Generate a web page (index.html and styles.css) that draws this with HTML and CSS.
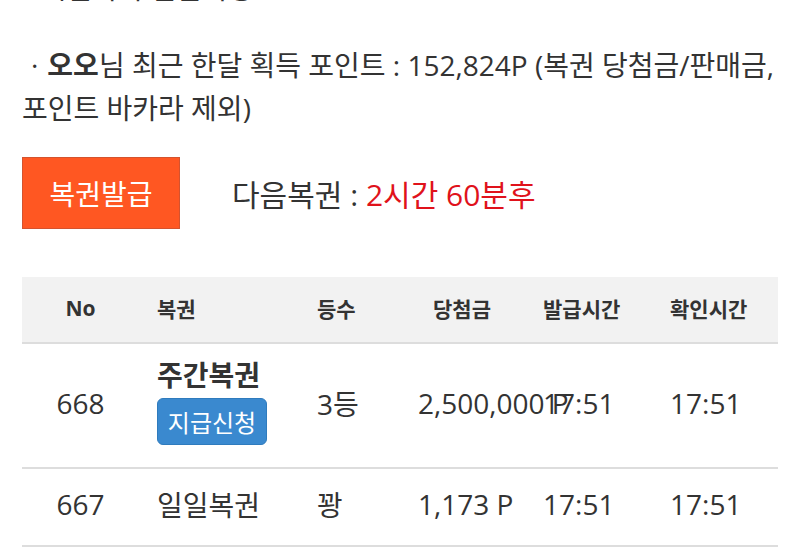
FILE: index.html
```html
<!DOCTYPE html>
<html lang="ko">
<head>
<meta charset="utf-8">
<title>복권</title>
<link rel="stylesheet" href="styles.css">
</head>
<body>
<div class="page">
  <p class="note note-top">3시간마다 발급가능</p>
  <p class="note"><span class="dot">·</span><b>오오</b>님 최근 한달 획득 포인트 : 152,824P (복권 당첨금/판매금,<br>포인트 바카라 제외)</p>
  <div class="issue">
    <button class="btn-issue" type="button">복권발급</button>
    <p class="next">다음복권 : <span class="red">2시간 60분후</span></p>
  </div>
  <table class="lotto">
    <colgroup>
      <col class="c-no"><col class="c-name"><col class="c-rank"><col class="c-prize"><col class="c-issue"><col class="c-check">
    </colgroup>
    <thead>
      <tr>
        <th class="t-no">No</th>
        <th>복권</th>
        <th>등수</th>
        <th class="t-prize">당첨금</th>
        <th>발급시간</th>
        <th>확인시간</th>
      </tr>
    </thead>
    <tbody>
      <tr class="row-tall">
        <td class="t-no">668</td>
        <td>
          <div class="name-bold">주간복권</div>
          <button class="btn-claim" type="button">지급신청</button>
        </td>
        <td>3등</td>
        <td class="t-prize">2,500,000 P</td>
        <td>17:51</td>
        <td>17:51</td>
      </tr>
      <tr class="row-short">
        <td class="t-no">667</td>
        <td>일일복권</td>
        <td>꽝</td>
        <td class="t-prize">1,173 P</td>
        <td>17:51</td>
        <td>17:51</td>
      </tr>
    </tbody>
  </table>
</div>
</body>
</html>
```

FILE: styles.css
```css
html, body {
  margin: 0;
  padding: 0;
  background: #ffffff;
}
body {
  font-family: "Open Sans", "Noto Sans CJK KR", sans-serif;
  color: #333333;
  font-size: 28px;
  overflow: hidden;
}
.page {
  padding: 0 22px;
}
.note {
  margin: 0;
  line-height: 43px;
}
.note-top {
  margin-top: -33px;
  margin-bottom: 34px;
  padding-left: 3px;
}
.note b {
  font-weight: 700;
}
.dot {
  display: inline-block;
  padding-left: 9px;
  margin-right: 9px;
}
.issue {
  display: flex;
  align-items: center;
  gap: 52px;
  margin-top: 27px;
}
.btn-issue {
  width: 158px;
  height: 72px;
  background: #ff5722;
  border: 1px solid #d4532e;
  color: #ffffff;
  font-family: "Open Sans", "Noto Sans CJK KR", sans-serif;
  font-size: 28px;
  padding: 0;
  margin: 0;
}
.next {
  margin: 0;
  font-size: 30px;
}
.red {
  color: #e0121b;
}
.lotto {
  margin-top: 48px;
  width: 756px;
  border-collapse: collapse;
  table-layout: fixed;
}
.c-no { width: 135px; }
.c-name { width: 160px; }
.c-rank { width: 101px; }
.c-prize { width: 125px; }
.c-issue { width: 127px; }
.c-check { width: 108px; }
.lotto th {
  background: #f2f2f2;
  height: 61px;
  font-size: 21px;
  font-weight: 700;
  text-align: left;
  padding: 0 0 4px;
  border-bottom: 2px solid #dddddd;
}
.lotto td {
  padding: 0 0 6px;
  text-align: left;
  white-space: nowrap;
  vertical-align: middle;
  border-bottom: 2px solid #dddddd;
}
.lotto .t-no {
  text-align: center;
  padding-right: 18px;
}
.lotto th.t-prize {
  text-align: center;
  padding-right: 37px;
}
.lotto td.t-prize {
  text-align: center;
  padding-right: 37px;
}
.row-tall td {
  height: 117px;
}
.row-short td {
  height: 70px;
}
.name-bold {
  font-weight: 700;
  line-height: 30px;
  margin-top: 0;
}
.btn-claim {
  margin-top: 8px;
  width: 110px;
  height: 47px;
  background: #3a89cf;
  border: 1px solid #2f7bbd;
  border-radius: 6px;
  color: #ffffff;
  font-family: "Open Sans", "Noto Sans CJK KR", sans-serif;
  font-size: 24px;
  padding: 0;
}
```
